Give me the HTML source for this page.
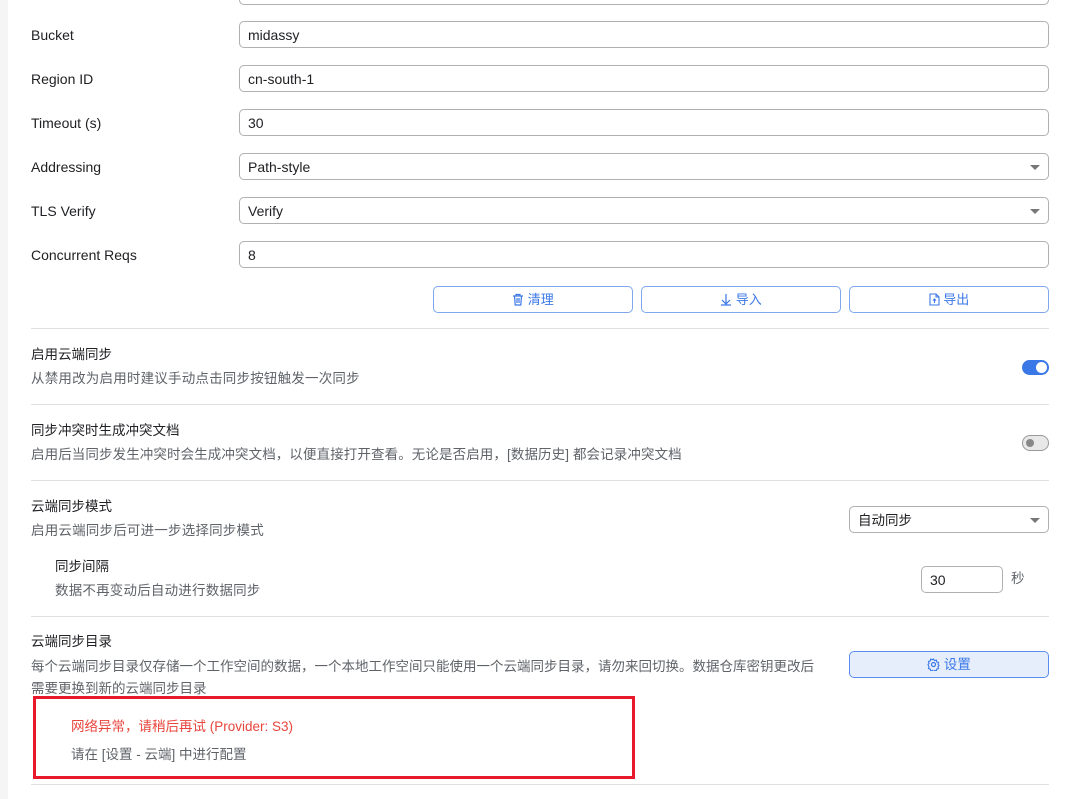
<!DOCTYPE html>
<html><head><meta charset="utf-8"><style>
*{box-sizing:border-box;margin:0;padding:0}
body{width:1072px;height:799px;overflow:hidden;background:#fff;font-family:"Liberation Sans","Noto Sans CJK SC",sans-serif;color:#202124;position:relative}
.abs{position:absolute}
.strip{left:0;top:0;width:8px;height:799px;background:#f5f5f5}
.lbl{left:31px;font-size:14px;color:#202124;line-height:20px}
.inp{left:239px;width:810px;height:27px;border:1px solid #b0b0b0;border-radius:5px;font-size:14px;line-height:27px;padding-left:8px;color:#202124}
.caret{position:absolute;right:8px;top:11px;width:0;height:0;border-left:5px solid transparent;border-right:5px solid transparent;border-top:5px solid #777}
.btn{top:286px;width:200px;height:27px;border:1px solid #7fa6ee;border-radius:5px;color:#3b78e7;font-size:13px;text-align:center;line-height:25px}
.sep{left:31px;width:1018px;height:1px;background:#e0e0e0}
.t{font-size:13.5px;line-height:20px;color:#202124}
.d{font-size:13.5px;line-height:20px;color:#5f6368;letter-spacing:.2px}
</style></head><body>
<div class="abs strip"></div>
<div class="abs inp" style="top:-22px"></div>
<div class="abs lbl" style="top:25px">Bucket</div><div class="abs inp" style="top:21px">midassy</div>
<div class="abs lbl" style="top:69px">Region ID</div><div class="abs inp" style="top:65px">cn-south-1</div>
<div class="abs lbl" style="top:113px">Timeout (s)</div><div class="abs inp" style="top:109px">30</div>
<div class="abs lbl" style="top:157px">Addressing</div><div class="abs inp" style="top:153px">Path-style<span class="caret"></span></div>
<div class="abs lbl" style="top:201px">TLS Verify</div><div class="abs inp" style="top:197px">Verify<span class="caret"></span></div>
<div class="abs lbl" style="top:245px">Concurrent Reqs</div><div class="abs inp" style="top:241px">8</div>
<div class="abs btn" style="left:433px"><svg width="12" height="13" viewBox="0 0 12 13" style="vertical-align:-2px"><path d="M1 3h10M4 3V1.5h4V3M2.5 3l.7 9h5.6l.7-9M5 5v5M7 5v5" fill="none" stroke="#3b78e7" stroke-width="1.2"/></svg> 清理</div>
<div class="abs btn" style="left:641px"><svg width="12" height="13" viewBox="0 0 12 13" style="vertical-align:-2px"><path d="M6 1v10M2 7l4 4 4-4M1 12h10" fill="none" stroke="#3b78e7" stroke-width="1.2"/></svg> 导入</div>
<div class="abs btn" style="left:849px"><svg width="11" height="13" viewBox="0 0 11 13" style="vertical-align:-2px"><path d="M1 1h6l3 3v8H1zM7 1v3h3M5.5 10V6M4 7.5l1.5-1.5 1.5 1.5" fill="none" stroke="#3b78e7" stroke-width="1.1"/></svg> 导出</div>
<div class="abs sep" style="top:328px"></div>
<div class="abs t" style="left:31px;top:345px">启用云端同步</div>
<div class="abs d" style="left:31px;top:369px">从禁用改为启用时建议手动点击同步按钮触发一次同步</div>
<div class="abs" style="left:1022px;top:360px;width:27px;height:15px;border-radius:8px;background:#3b78e7"><div class="abs" style="right:2px;top:2px;width:11px;height:11px;border-radius:50%;background:#fff"></div></div>
<div class="abs sep" style="top:404px"></div>
<div class="abs t" style="left:31px;top:421px">同步冲突时生成冲突文档</div>
<div class="abs d" style="left:31px;top:445px;letter-spacing:.1px">启用后当同步发生冲突时会生成冲突文档，以便直接打开查看。无论是否启用，[数据历史] 都会记录冲突文档</div>
<div class="abs" style="left:1022px;top:435px;width:27px;height:16px;border-radius:8px;background:#e8e8e8;border:1px solid #999"><div class="abs" style="left:3px;top:3px;width:8px;height:8px;border-radius:50%;background:#888"></div></div>
<div class="abs sep" style="top:480px"></div>
<div class="abs t" style="left:31px;top:497px">云端同步模式</div>
<div class="abs d" style="left:31px;top:521px">启用云端同步后可进一步选择同步模式</div>
<div class="abs inp" style="left:849px;width:200px;top:506px;font-size:13.5px">自动同步<span class="caret"></span></div>
<div class="abs t" style="left:55px;top:557px">同步间隔</div>
<div class="abs d" style="left:55px;top:581px">数据不再变动后自动进行数据同步</div>
<div class="abs inp" style="left:921px;width:82px;top:566px">30</div>
<div class="abs d" style="left:1011px;top:569px">秒</div>
<div class="abs sep" style="top:616px"></div>
<div class="abs t" style="left:31px;top:632px">云端同步目录</div>
<div class="abs d" style="left:31px;top:656px;width:810px;line-height:22px;letter-spacing:0">每个云端同步目录仅存储一个工作空间的数据，一个本地工作空间只能使用一个云端同步目录，请勿来回切换。数据仓库密钥更改后<br>需要更换到新的云端同步目录</div>
<div class="abs btn" style="left:849px;top:651px;background:#e6eefc;border-color:#5b8def;font-size:13.5px"><svg width="13" height="13" viewBox="0 0 13 13" style="vertical-align:-2px"><circle cx="6.5" cy="6.5" r="2" fill="none" stroke="#3b78e7" stroke-width="1.2"/><path d="M6.5 1l1 1.6 1.8-.5.4 1.8 1.8.5-.5 1.8 1 1.3-1 1.3.5 1.8-1.8.5-.4 1.8-1.8-.5-1 1.6-1-1.6-1.8.5-.4-1.8-1.8-.5.5-1.8L1 6.5l1-1.3-.5-1.8 1.8-.5.4-1.8 1.8.5z" fill="none" stroke="#3b78e7" stroke-width="1.1"/></svg> 设置</div>
<div class="abs" style="left:33px;top:696px;width:602px;height:83px;border:3px solid #e8192c"></div>
<div class="abs" style="left:71px;top:717px;font-size:13.5px;line-height:20px;color:#e8453c">网络异常，请稍后再试 (Provider: S3)</div>
<div class="abs" style="left:71px;top:745px;font-size:13.5px;line-height:20px;color:#5f6368">请在 [设置 - 云端] 中进行配置</div>
<div class="abs sep" style="top:784px"></div>
</body></html>
